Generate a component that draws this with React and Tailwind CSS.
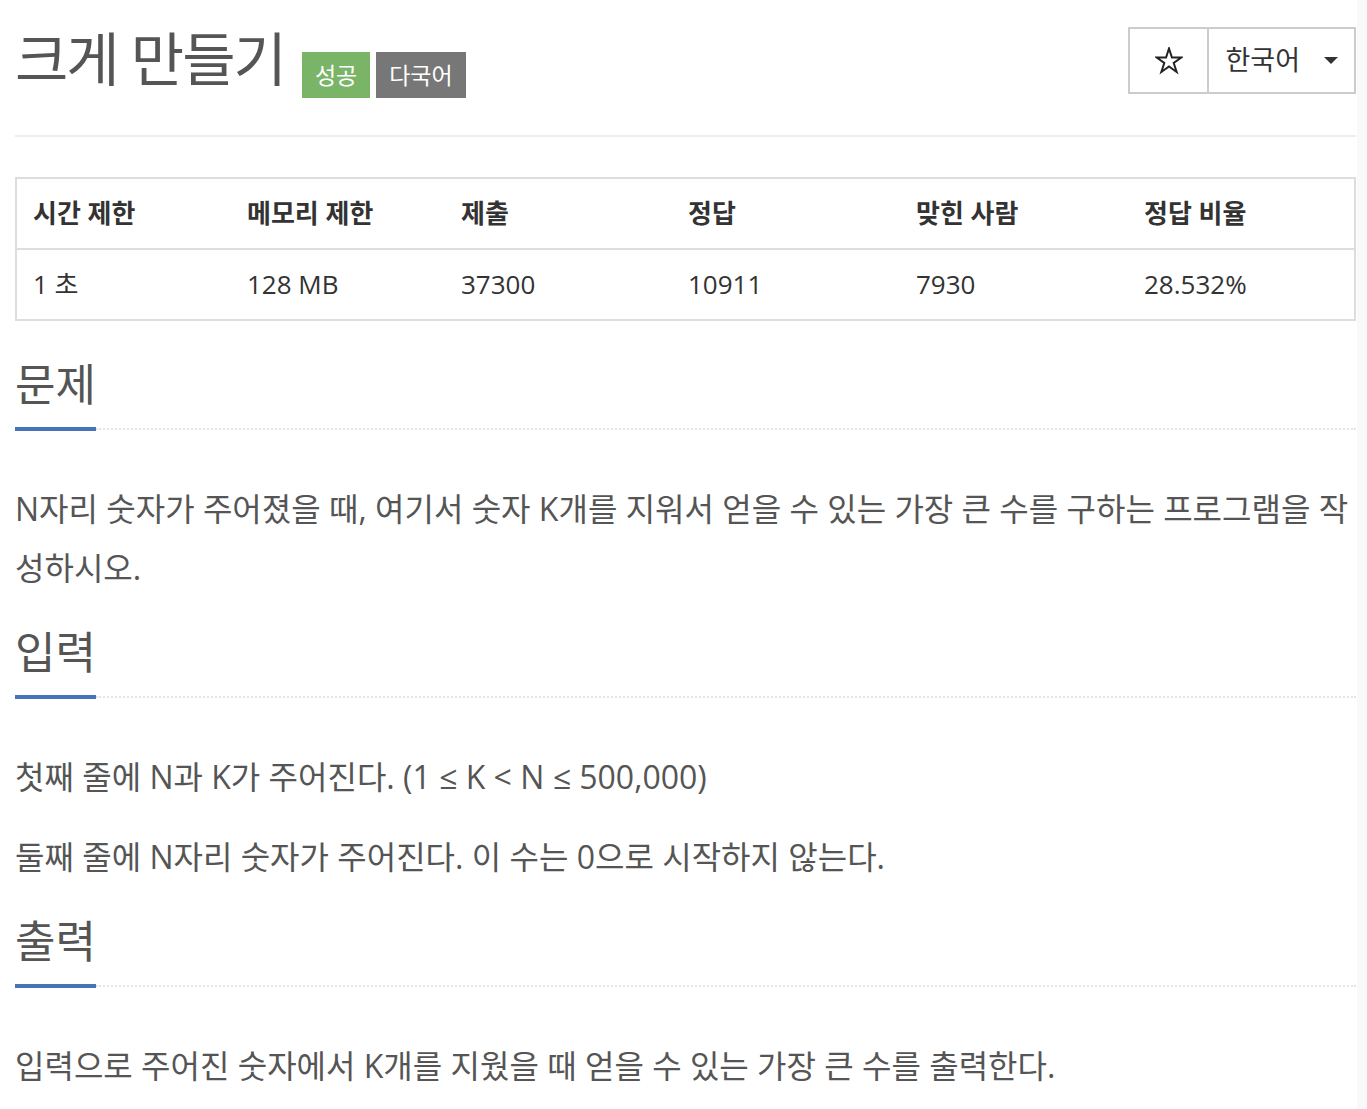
const stats = [
  { label: '시간 제한', value: '1 초', w: 'w-[215px]' },
  { label: '메모리 제한', value: '128 MB', w: 'w-[214px]' },
  { label: '제출', value: '37300', w: 'w-[227px]' },
  { label: '정답', value: '10911', w: 'w-[228px]' },
  { label: '맞힌 사람', value: '7930', w: 'w-[228px]' },
  { label: '정답 비율', value: '28.532%', w: '' },
];

function Headline({ children, first }) {
  return (
    <div className={first ? 'mt-[39px]' : 'mt-[31px]'}>
      <h2 className="text-[44px] leading-[48px] text-[#555]">{children}</h2>
      <div className="mt-[19px] flex items-center">
        <div className="h-[4px] w-[81px] bg-[#4575b8]" />
        <div className="flex-1 border-t-2 border-dotted border-[#e4e4e4]" />
      </div>
    </div>
  );
}

function Para({ children }) {
  return <p className="mt-[48px] text-[32px] leading-[59px] text-[#555]">{children}</p>;
}

function StarIcon() {
  return (
    <svg width="28" height="28" viewBox="0 0 28 28" fill="none">
      <polygon
        points="14,1.5 16.93,10.5 26.36,10.5 18.72,16 21.64,25 14,19.5 6.36,25 9.28,16 1.64,10.5 11.07,10.5"
        stroke="#222"
        strokeWidth="2"
        strokeLinejoin="miter"
      />
    </svg>
  );
}

export default function App() {
  return (
    <div className="min-h-screen bg-[#f9f9f9] font-['Open_Sans','Noto_Sans_CJK_KR',sans-serif]">
      <div className="w-[1357px] min-h-screen bg-white pl-[15px] pr-[1px] pb-[40px]">
        <div className="flex items-start justify-between pt-[27px]">
          <div className="flex items-start pt-[3px]">
            <h1 className="text-[58px] leading-none tracking-[-2px] text-[#555]">크게 만들기</h1>
            <div className="ml-[17px] mt-[22px] flex gap-[6px] text-[23px] text-white">
              <span className="flex h-[46px] items-center bg-[#7ab567] px-[13px]">성공</span>
              <span className="flex h-[46px] items-center bg-[#777] px-[13px]">다국어</span>
            </div>
          </div>
          <div className="flex h-[67px] border-2 border-[#ccc] text-[#333]">
            <button className="flex w-[77px] items-center justify-center">
              <StarIcon />
            </button>
            <button className="flex items-center border-l-2 border-[#ccc] pl-[16px] pr-[16px] text-[27px]">
              <span>한국어</span>
              <span className="ml-[24px] h-0 w-0 border-l-[7px] border-r-[7px] border-t-[7px] border-l-transparent border-r-transparent border-t-[#333]" />
            </button>
          </div>
        </div>

        <div className="mt-[37px] h-[2px] bg-[#eee]" />

        <table className="mt-[40px] w-full table-fixed border-collapse border-2 border-[#ddd] text-left text-[26px] text-[#333]">
          <thead>
            <tr className="border-b-2 border-[#ddd]">
              {stats.map((s) => (
                <th key={s.label} className={`${s.w} h-[71px] px-[16px] font-bold`}>
                  {s.label}
                </th>
              ))}
            </tr>
          </thead>
          <tbody>
            <tr>
              {stats.map((s) => (
                <td key={s.label} className="h-[71px] px-[16px]">
                  {s.value}
                </td>
              ))}
            </tr>
          </tbody>
        </table>

        <Headline first>문제</Headline>
        <Para>
          N자리 숫자가 주어졌을 때, 여기서 숫자 K개를 지워서 얻을 수 있는 가장 큰 수를 구하는 프로그램을 작성하시오.
        </Para>

        <Headline>입력</Headline>
        <Para>첫째 줄에 N과 K가 주어진다. (1 ≤ K &lt; N ≤ 500,000)</Para>
        <p className="mt-[21px] text-[32px] leading-[59px] text-[#555]">
          둘째 줄에 N자리 숫자가 주어진다. 이 수는 0으로 시작하지 않는다.
        </p>

        <Headline>출력</Headline>
        <Para>입력으로 주어진 숫자에서 K개를 지웠을 때 얻을 수 있는 가장 큰 수를 출력한다.</Para>
      </div>
    </div>
  );
}
